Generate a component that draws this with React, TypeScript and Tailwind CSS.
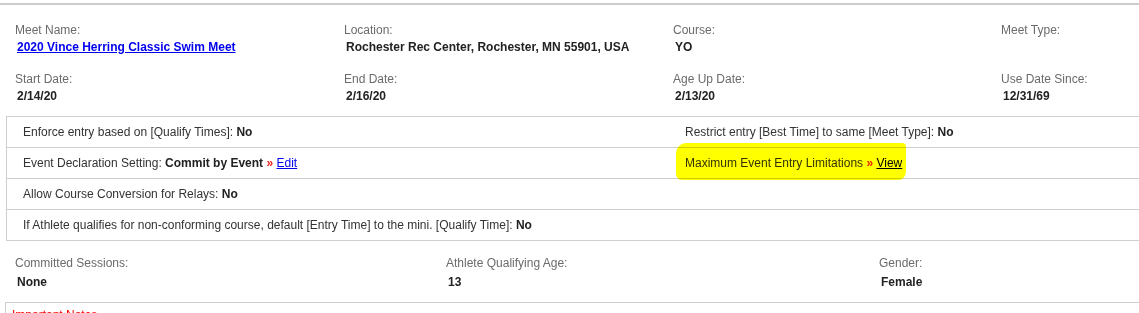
import React from 'react';

const font = { fontFamily: '"Liberation Sans", Arial, sans-serif' };

function Field({ label, children }: { label: string; children?: React.ReactNode }) {
    return (
        <div className="min-w-0">
            <div className="text-[12px] leading-4 text-[#6b6b6b] whitespace-nowrap">{label}</div>
            <div className="text-[12px] leading-[18px] font-bold text-[#222] pl-[2px] whitespace-nowrap h-[18px]">{children}</div>
        </div>
    );
}

function Row({ children }: { children: React.ReactNode }) {
    return (
        <div className="grid grid-cols-[662px_1fr] h-[31px] border-b border-[#cfcfcf] items-center text-[12px] text-[#333] whitespace-nowrap">
            {children}
        </div>
    );
}

export default function App() {
    return (
        <div className="w-[1139px] h-[313px] overflow-hidden bg-white" style={font}>
            {/* Meet details */}
            <div className="mt-[3px] border-t-2 border-[#cccccc] pt-[17px] pl-[15px]">
                <div className="grid grid-cols-[329px_329px_328px_1fr]">
                    <div className="min-w-0">
                        <div className="text-[12px] leading-4 text-[#6b6b6b]">Meet Name:</div>
                        <div className="text-[12px] leading-[18px] font-bold pl-[2px]">
                            <a href="#" className="text-[#0000ee] underline">2020 Vince Herring Classic Swim Meet</a>
                        </div>
                    </div>
                    <Field label="Location:">Rochester Rec Center, Rochester, MN 55901, USA</Field>
                    <Field label="Course:">YO</Field>
                    <Field label="Meet Type:" />
                </div>
                <div className="grid grid-cols-[329px_329px_328px_1fr] mt-[15px]">
                    <Field label="Start Date:">2/14/20</Field>
                    <Field label="End Date:">2/16/20</Field>
                    <Field label="Age Up Date:">2/13/20</Field>
                    <Field label="Use Date Since:">12/31/69</Field>
                </div>
            </div>

            {/* Entry rules table */}
            <div className="relative mt-[11px] ml-[6px] border-t border-l border-[#cfcfcf]">
                <Row>
                    <div className="pl-4">Enforce entry based on [Qualify Times]: <b className="text-[#222]">No</b></div>
                    <div className="pl-4">Restrict entry [Best Time] to same [Meet Type]: <b className="text-[#222]">No</b></div>
                </Row>
                <Row>
                    <div className="pl-4">
                        Event Declaration Setting: <b className="text-[#222]">Commit by Event</b>{' '}
                        <span className="text-[#e8241b] font-bold">»</span>{' '}
                        <a href="#" className="text-[#0000ee] underline">Edit</a>
                    </div>
                    <div className="pl-4">
                        Maximum Event Entry Limitations{' '}
                        <span className="text-[#e8241b] font-bold">»</span>{' '}
                        <a href="#" className="text-[#0000ee] underline">View</a>
                    </div>
                </Row>
                <Row>
                    <div className="pl-4">Allow Course Conversion for Relays: <b className="text-[#222]">No</b></div>
                    <div />
                </Row>
                <Row>
                    <div className="pl-4 col-span-2">
                        If Athlete qualifies for non-conforming course, default [Entry Time] to the mini. [Qualify Time]: <b className="text-[#222]">No</b>
                    </div>
                </Row>

                {/* marker highlight */}
                <div className="absolute left-[669px] top-[26px] w-[230px] h-[37px] bg-[#ffff00] mix-blend-multiply rounded-tl-[10px] rounded-tr-[4px] rounded-br-[8px] rounded-bl-[6px] pointer-events-none" />
            </div>

            {/* Session details */}
            <div className="pt-[14px] pl-[15px]">
                <div className="grid grid-cols-[431px_433px_1fr]">
                    <div>
                        <div className="text-[12px] leading-4 text-[#6b6b6b]">Committed Sessions:</div>
                        <div className="mt-[2px] text-[12px] leading-[18px] font-bold text-[#222] pl-[2px]">None</div>
                    </div>
                    <div>
                        <div className="text-[12px] leading-4 text-[#6b6b6b]">Athlete Qualifying Age:</div>
                        <div className="mt-[2px] text-[12px] leading-[18px] font-bold text-[#222] pl-[2px]">13</div>
                    </div>
                    <div>
                        <div className="text-[12px] leading-4 text-[#6b6b6b]">Gender:</div>
                        <div className="mt-[2px] text-[12px] leading-[18px] font-bold text-[#222] pl-[2px]">Female</div>
                    </div>
                </div>
            </div>

            {/* Notes box */}
            <div className="mt-[11px] ml-[5px] border-t border-l border-[#cfcfcf] pl-[6px] pt-[4px]">
                <div className="text-[12px] leading-4 text-[#ff0000]">Important Notes</div>
            </div>
        </div>
    );
}
